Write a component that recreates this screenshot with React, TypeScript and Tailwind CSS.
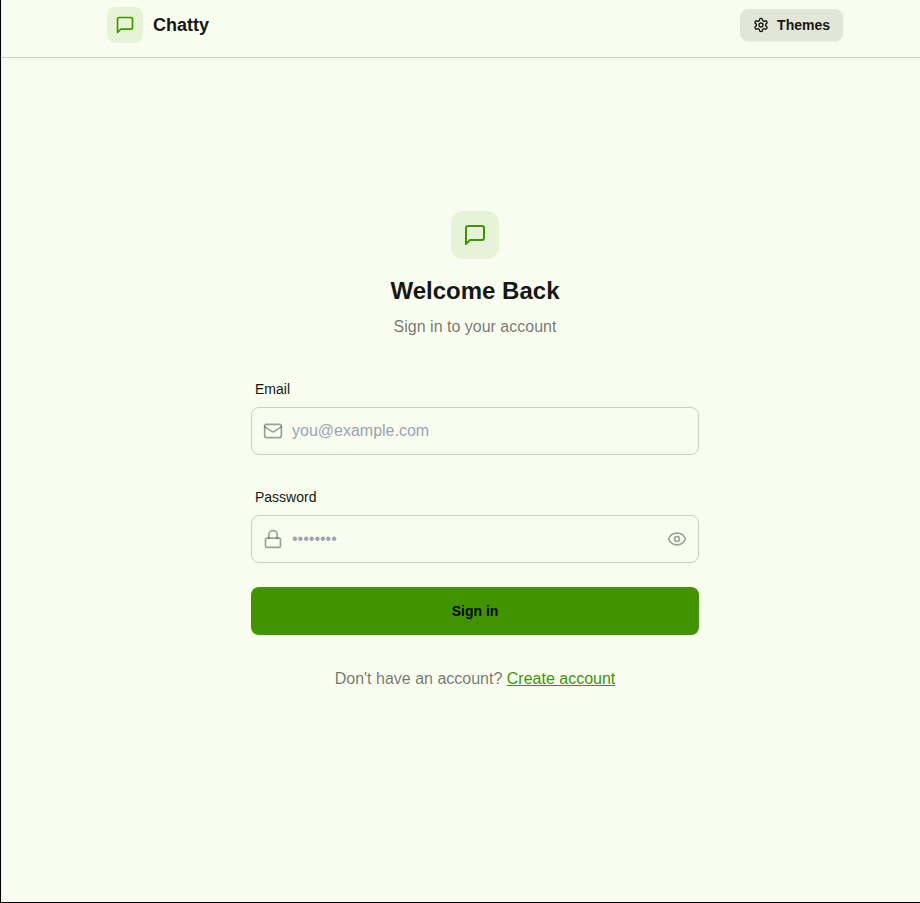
import type { ReactNode } from "react";

type IconProps = { className: string; children: ReactNode };

function Icon({ className, children }: IconProps) {
  return (
    <svg
      className={className}
      viewBox="0 0 24 24"
      fill="none"
      stroke="currentColor"
      strokeWidth={2}
      strokeLinecap="round"
      strokeLinejoin="round"
    >
      {children}
    </svg>
  );
}

function MessageIcon({ className }: { className: string }) {
  return (
    <Icon className={className}>
      <path d="M21 15a2 2 0 0 1-2 2H7l-4 4V5a2 2 0 0 1 2-2h14a2 2 0 0 1 2 2z" />
    </Icon>
  );
}

function SettingsIcon() {
  return (
    <Icon className="size-4">
      <path d="M12.22 2h-.44a2 2 0 0 0-2 2v.18a2 2 0 0 1-1 1.73l-.43.25a2 2 0 0 1-2 0l-.15-.08a2 2 0 0 0-2.73.73l-.22.38a2 2 0 0 0 .73 2.73l.15.1a2 2 0 0 1 1 1.72v.51a2 2 0 0 1-1 1.74l-.15.09a2 2 0 0 0-.73 2.73l.22.38a2 2 0 0 0 2.73.73l.15-.08a2 2 0 0 1 2 0l.43.25a2 2 0 0 1 1 1.73V20a2 2 0 0 0 2 2h.44a2 2 0 0 0 2-2v-.18a2 2 0 0 1 1-1.73l.43-.25a2 2 0 0 1 2 0l.15.08a2 2 0 0 0 2.73-.73l.22-.39a2 2 0 0 0-.73-2.73l-.15-.08a2 2 0 0 1-1-1.74v-.5a2 2 0 0 1 1-1.74l.15-.09a2 2 0 0 0 .73-2.73l-.22-.38a2 2 0 0 0-2.73-.73l-.15.08a2 2 0 0 1-2 0l-.43-.25a2 2 0 0 1-1-1.73V4a2 2 0 0 0-2-2z" />
      <circle cx="12" cy="12" r="3" />
    </Icon>
  );
}

type FieldProps = {
  label: string;
  type: string;
  placeholder: string;
  icon: ReactNode;
  action?: ReactNode;
};

function Field({ label, type, placeholder, icon, action }: FieldProps) {
  return (
    <label className="block">
      <span className="block px-1 py-2 text-sm font-medium">{label}</span>
      <span className="flex h-12 items-center rounded-lg border border-[#161713]/20 px-[11px]">
        {icon}
        <input
          type={type}
          placeholder={placeholder}
          className="ml-[9px] min-w-0 flex-1 bg-transparent text-base outline-none placeholder:text-[#9ca3af]"
        />
        {action}
      </span>
    </label>
  );
}

export default function App() {
  return (
    <div className="flex h-[903px] flex-col overflow-hidden border-b border-l border-black bg-[#f9fdef] font-['Liberation_Sans',Arial,sans-serif] text-[#161713]">
      <header className="flex h-[58px] shrink-0 items-start justify-between border-b border-[#c8cfc0] bg-[#f8fdef] pr-[77px] pl-[106px]">
        <a className="mt-[7px] flex items-center gap-2.5">
          <span className="flex size-9 items-center justify-center rounded-lg bg-[#e6f3d7]">
            <MessageIcon className="size-5 text-[#419400]" />
          </span>
          <h1 className="text-lg font-bold">Chatty</h1>
        </a>
        <button className="mt-[9px] flex h-8 items-center gap-2 rounded-lg border border-[#e1e6d9] bg-[#e1e6d9] px-3 text-sm font-semibold shadow-xs">
          <SettingsIcon />
          <span>Themes</span>
        </button>
      </header>

      <main className="flex flex-1 justify-center pt-[153px] pl-[29px]">
        <div className="w-[448px]">
          <div className="mb-8 flex flex-col items-center gap-2">
            <div className="flex size-12 items-center justify-center rounded-xl bg-[#e6f3d7]">
              <MessageIcon className="size-6 text-[#419400]" />
            </div>
            <h2 className="mt-2 text-2xl font-bold">Welcome Back</h2>
            <p className="text-[#161713]/60">Sign in to your account</p>
          </div>

          <form className="space-y-6">
            <Field
              label="Email"
              type="email"
              placeholder="you@example.com"
              icon={
                <Icon className="size-5 shrink-0 text-[#161713]/40">
                  <rect width="20" height="16" x="2" y="4" rx="2" />
                  <path d="m22 7-8.97 5.7a1.94 1.94 0 0 1-2.06 0L2 7" />
                </Icon>
              }
            />
            <Field
              label="Password"
              type="password"
              placeholder="••••••••"
              icon={
                <Icon className="size-5 shrink-0 text-[#161713]/40">
                  <rect width="18" height="11" x="3" y="11" rx="2" ry="2" />
                  <path d="M7 11V7a5 5 0 0 1 10 0v4" />
                </Icon>
              }
              action={
                <Icon className="size-5 shrink-0 text-[#161713]/40">
                  <path d="M2.062 12.348a1 1 0 0 1 0-.696 10.75 10.75 0 0 1 19.876 0 1 1 0 0 1 0 .696 10.75 10.75 0 0 1-19.876 0" />
                  <circle cx="12" cy="12" r="3" />
                </Icon>
              }
            />
            <button
              type="button"
              className="flex h-12 w-full items-center justify-center rounded-lg bg-[#419400] text-sm font-semibold text-[#010800] shadow-xs"
            >
              Sign in
            </button>
          </form>

          <p className="mt-8 text-center text-[#161713]/60">
            Don't have an account?{" "}
            <a className="text-[#419400] underline">Create account</a>
          </p>
        </div>
      </main>
    </div>
  );
}
